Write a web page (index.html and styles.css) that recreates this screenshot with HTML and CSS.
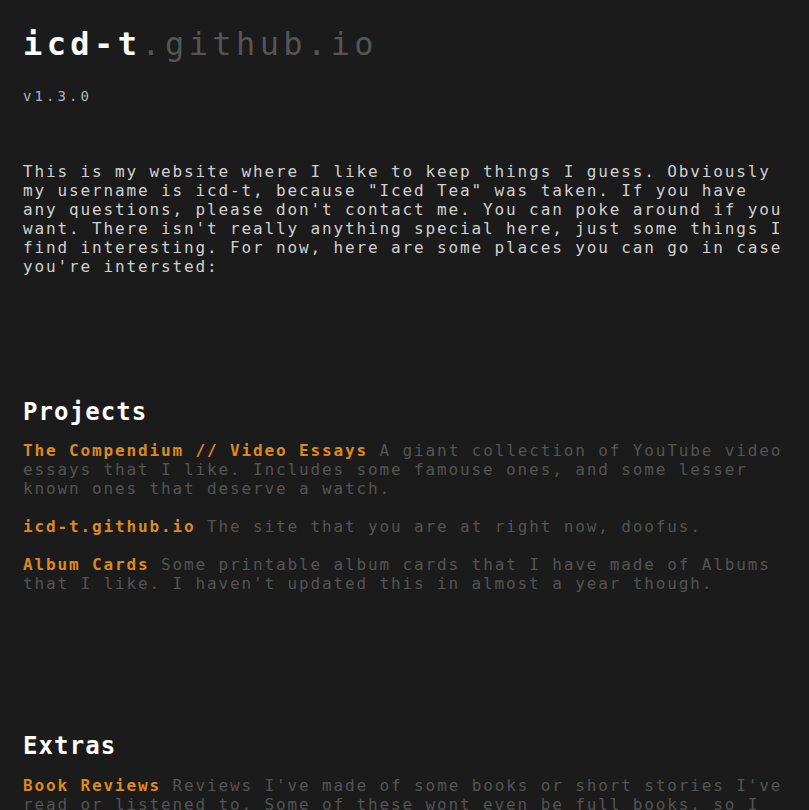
FILE: index.html
```html
<!DOCTYPE html>
<html lang="en">
<head>
<meta charset="utf-8">
<title>icd-t.github.io</title>
<link rel="stylesheet" href="styles.css">
</head>
<body>
<main class="page">
  <header class="masthead">
    <h1 class="site-title"><span class="site-name">icd-t</span><span class="site-domain">.github.io</span></h1>
    <div class="version">v1.3.0</div>
  </header>

  <p class="intro">This is my website where I like to keep things I guess. Obviously my username is icd-t, because "Iced Tea" was taken. If you have any questions, please don't contact me. You can poke around if you want. There isn't really anything special here, just some things I find interesting. For now, here are some places you can go in case you're intersted:</p>

  <section class="section section-projects">
    <h2 class="section-title">Projects</h2>
    <p class="item"><a class="item-link" href="#">The Compendium // Video Essays</a> <span class="item-desc">A giant collection of YouTube video essays that I like. Includes some famouse ones, and some lesser known ones that deserve a watch.</span></p>
    <p class="item"><a class="item-link" href="#">icd-t.github.io</a> <span class="item-desc">The site that you are at right now, doofus.</span></p>
    <p class="item"><a class="item-link" href="#">Album Cards</a> <span class="item-desc">Some printable album cards that I have made of Albums that I like. I haven't updated this in almost a year though.</span></p>
  </section>

  <section class="section section-extras">
    <h2 class="section-title">Extras</h2>
    <p class="item"><a class="item-link" href="#">Book Reviews</a> <span class="item-desc">Reviews I've made of some books or short stories I've read or listened to. Some of these wont even be full books, so I might add more later on when I get around to it.</span></p>
  </section>
</main>
</body>
</html>
```

FILE: styles.css
```css
html, body {
  margin: 0;
  padding: 0;
  background: #1b1b1b;
}

body {
  font-family: "DejaVu Sans Mono", "Liberation Mono", monospace;
  font-size: 16px;
  line-height: 19px;
  letter-spacing: 1.87px;
  color: #cfcfcf;
  overflow: hidden;
}

.page {
  padding: 25px 23px 0 23px;
}

.masthead {
  display: flex;
  flex-direction: column;
}

.site-title {
  margin: 0;
  font-size: 32px;
  line-height: 38px;
  letter-spacing: 4.4px;
  font-weight: bold;
}

.site-name {
  color: #ffffff;
}

.site-domain {
  color: #555555;
  font-weight: normal;
}

.version {
  margin-top: 25px;
  font-size: 14px;
  line-height: 16px;
  letter-spacing: 3.07px;
  color: #b4b4b4;
}

.intro {
  margin: 58px 0 0 0;
  color: #d0d0d0;
}

.section-projects {
  margin-top: 122px;
}

.section-extras {
  margin-top: 139px;
}

.section-title {
  margin: 0 0 15px 0;
  font-size: 24px;
  line-height: 28px;
  letter-spacing: 1.1px;
  font-weight: bold;
  color: #ffffff;
}

.section-extras .section-title {
  margin-bottom: 16px;
}

.item {
  margin: 0 0 19px 0;
}

.item-link {
  color: #dc8a1e;
  font-weight: bold;
  text-decoration: none;
}

.item-desc {
  color: #545454;
}
```
